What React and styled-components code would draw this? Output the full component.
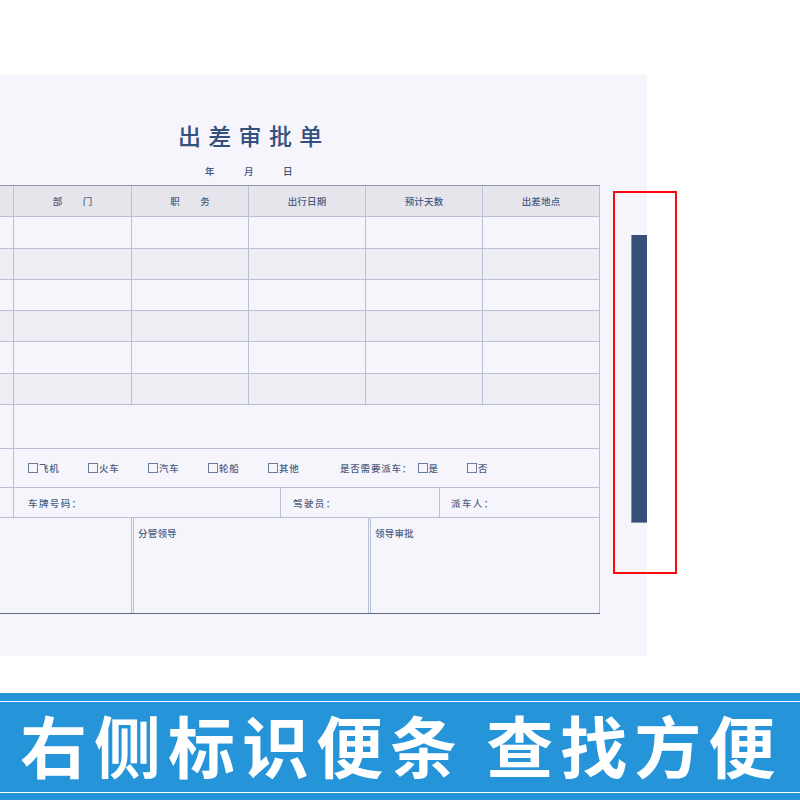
import React from "react"
import styled, { createGlobalStyle } from "styled-components"

const GlobalStyle = createGlobalStyle`
    html, body {
        margin: 0;
        padding: 0;
        background: #fff;
    }
    * {
        box-sizing: border-box;
    }
`

const Page = styled.div`
    position: relative;
    width: 800px;
    height: 800px;
    overflow: hidden;
    background: #fff;
    font-family: "Noto Sans CJK SC", "Liberation Sans", sans-serif;
    font-weight: 500;
    color: #4a5f85;
`

const Paper = styled.section`
    width: 647px;
    height: 581px;
    margin-top: 75px;
    padding-top: 44px;
    background: #f6f5fb;
`

const Title = styled.h1`
    margin: 0;
    width: 600px;
    height: 33px;
    padding-left: 178px;
    font-size: 23px;
    line-height: 32px;
    font-weight: 500;
    letter-spacing: 7.3px;
    color: #34507c;
`

const DateLine = styled.div`
    display: flex;
    gap: 29.5px;
    height: 33px;
    padding: 12px 0 0 205px;
    font-size: 9.5px;
    line-height: 14px;
    color: #415679;
`

const Table = styled.div`
    width: 600px;
    border-top: 1px solid #8e97ae;
    border-bottom: 1px solid #5d6b8a;
`

const Row = styled.div`
    display: grid;
    grid-template-columns: ${({ $cols }) => $cols || "14px 118px 117px 117px 117px 117px"};
    height: ${({ $h }) => $h}px;
    background: ${({ $bg }) => $bg || "transparent"};
    border-bottom: ${({ $last }) => ($last ? "none" : "1px solid #b7c0d4")};
`

const Cell = styled.div`
    display: flex;
    align-items: center;
    justify-content: ${({ $center }) => ($center ? "center" : "flex-start")};
    padding-left: ${({ $pad }) => $pad || 0}px;
    border-right: 1px solid #b7c0d4;
    font-size: 9.5px;
    letter-spacing: ${({ $ls }) => $ls || 0}px;
    white-space: nowrap;
`

const HeadCell = styled(Cell)`
    letter-spacing: ${({ $ls }) => $ls || 0.15}px;
    text-indent: ${({ $ls }) => $ls || 0}px;
    color: #475c82;
`

const SignCell = styled.div`
    padding: 8px 0 0 ${({ $pad }) => $pad || 0}px;
    border-right: ${({ $double }) => ($double ? "3px double #b7c0d4" : "1px solid #b7c0d4")};
    font-size: 9.5px;
    line-height: 14px;
    letter-spacing: 0.2px;
`

const Options = styled.div`
    display: flex;
    align-items: center;
    padding-left: 14px;
    border-right: 1px solid #b7c0d4;
    font-size: 9.5px;
    letter-spacing: 0.8px;
    white-space: nowrap;
`

const Option = styled.span`
    display: flex;
    align-items: center;
    width: ${({ $w }) => $w || 60}px;
`

const Box = styled.i`
    width: 10px;
    height: 10px;
    margin-right: 1px;
    border: 1px solid #6a7d9e;
`

const Question = styled.span`
    margin-left: 12px;
    width: 77.5px;
`

const Tab = styled.div`
    position: absolute;
    left: 631px;
    top: 235px;
    width: 16px;
    height: 288px;
    background: #36507a;
    border-left: 1px solid #8290aa;
    border-bottom: 1px solid #8290aa;
`

const Marker = styled.div`
    position: absolute;
    left: 613px;
    top: 191px;
    width: 64px;
    height: 383px;
    border: 2px solid #f80a10;
`

const Banner = styled.footer`
    height: 107px;
    margin-top: 37px;
    padding-top: 8px;
    background: #2594d9;
`

const BannerInner = styled.div`
    display: flex;
    align-items: center;
    height: 92px;
    padding: 0 0 7px 20px;
    border-top: 1px solid #fff;
    border-bottom: 1px solid #fff;
    font-size: 67px;
    font-weight: 700;
    line-height: 1;
    letter-spacing: 7px;
    color: #fff;
    white-space: pre;
`

const heads = [
    { text: "部门", ls: 20.4 },
    { text: "职务", ls: 20.4 },
    { text: "出行日期" },
    { text: "预计天数" },
    { text: "出差地点" },
]

const rowSpecs = [
    { h: 32, bg: "transparent" },
    { h: 31, bg: "#efeef4" },
    { h: 31, bg: "transparent" },
    { h: 31, bg: "#efeef4" },
    { h: 32, bg: "transparent" },
    { h: 31, bg: "#efeef4" },
]

const transports = ["飞机", "火车", "汽车", "轮船", "其他"]

const App = () => {
    return (
        <Page>
            <GlobalStyle />
            <Paper>
                <Title>出差审批单</Title>
                <DateLine>
                    <span>年</span>
                    <span>月</span>
                    <span>日</span>
                </DateLine>
                <Table>
                    <Row $h={31} $bg="#e6e5ec">
                        <Cell />
                        {heads.map((head) => (
                            <HeadCell key={head.text} $center $ls={head.ls}>
                                {head.text}
                            </HeadCell>
                        ))}
                    </Row>
                    {rowSpecs.map((row, i) => (
                        <Row key={i} $h={row.h} $bg={row.bg}>
                            <Cell />
                            <Cell />
                            <Cell />
                            <Cell />
                            <Cell />
                            <Cell />
                        </Row>
                    ))}
                    <Row $h={44} $cols="14px 586px">
                        <Cell />
                        <Cell />
                    </Row>
                    <Row $h={39} $cols="14px 586px">
                        <Cell />
                        <Options>
                            {transports.map((name) => (
                                <Option key={name}>
                                    <Box />
                                    {name}
                                </Option>
                            ))}
                            <Question>是否需要派车：</Question>
                            <Option $w={49.5}>
                                <Box />是
                            </Option>
                            <Option $w={30}>
                                <Box />否
                            </Option>
                        </Options>
                    </Row>
                    <Row $h={30} $cols="14px 267px 159px 160px">
                        <Cell />
                        <Cell $pad={14} $ls={1.4}>车牌号码：</Cell>
                        <Cell $pad={12} $ls={1.4}>驾驶员：</Cell>
                        <Cell $pad={11} $ls={1.4}>派车人：</Cell>
                    </Row>
                    <Row $h={95} $cols="134px 237px 229px" $last>
                        <SignCell $double />
                        <SignCell $double $pad={4}>分管领导</SignCell>
                        <SignCell $pad={4}>领导审批</SignCell>
                    </Row>
                </Table>
            </Paper>
            <Tab />
            <Marker />
            <Banner>
                <BannerInner>右侧标识便条 查找方便</BannerInner>
            </Banner>
        </Page>
    )
}

export default App
